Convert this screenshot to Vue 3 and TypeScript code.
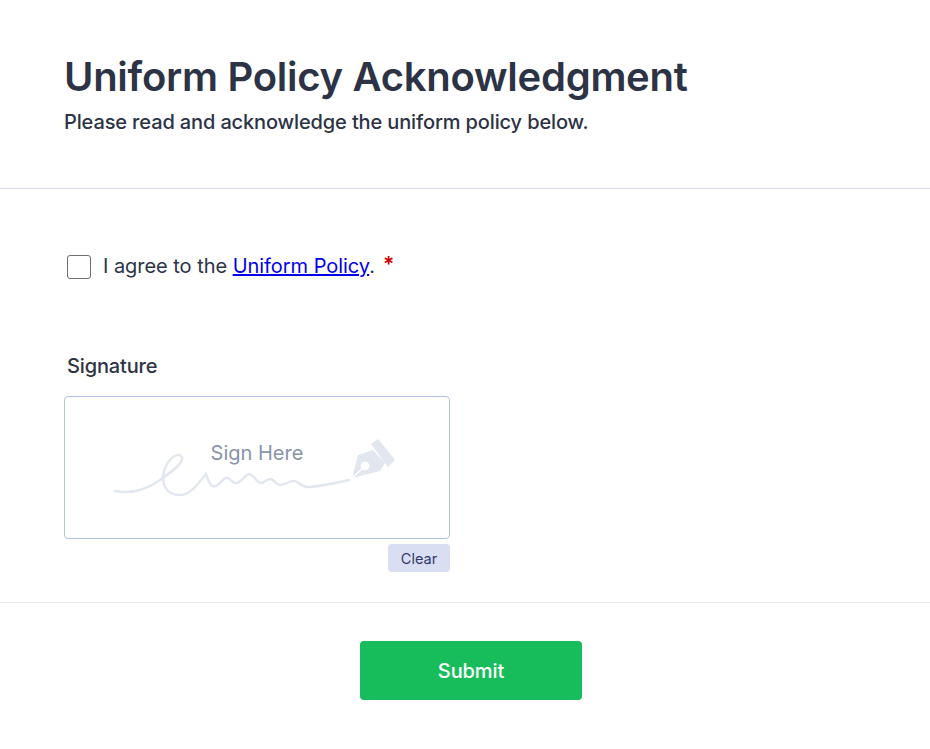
<template>
  <div class="form">
    <!-- Encabezado -->
    <header class="form-header">
      <h1>Uniform Policy Acknowledgment</h1>
      <p>Please read and acknowledge the uniform policy below.</p>
    </header>

    <section class="form-body">
      <label class="agree">
        <input v-model="agreed" type="checkbox" class="agree-box">
        <span>I agree to the <a href="#" class="policy-link">Uniform Policy</a>.</span>
        <span class="required">*</span>
      </label>

      <div class="signature">
        <div class="signature-label">Signature</div>
        <div class="signature-pad">
          <svg class="signature-art" viewBox="64 396 386 143" aria-hidden="true">
            <path
              d="M115 491 C130 494 146 490 160 480 C168 474 184 464 182 457 C179 451 168 458 164 471 C161 484 166 495 180 495 C190 495 198 484 206 474 C209 481 210 488 216 486 C221 484 224 476 228 478 C232 480 233 484 237 483 C243 481 246 473 250 474 C255 476 257 484 262 483 C265 482 267 479 271 479 C275 480 276 485 280 485 C286 485 290 480 295 481 C300 483 303 488 310 487 C322 486 336 483 349 480"
              fill="none"
              stroke="#e1e6ef"
              stroke-width="2.4"
              stroke-linecap="round"
            />
            <path
              fill-rule="evenodd"
              fill="#e1e6ef"
              d="M352 478 L358 455 L373 450 L385 463 L380 471 Z M365 461.5 a4.4 4.4 0 1 0 0.01 0 Z"
            />
            <path d="M352 478 L362 469" stroke="#fff" stroke-width="1.4" fill="none" />
            <path fill="#e1e6ef" d="M371 444 L378 439 L395 460 L388 467 Z" />
          </svg>
          <span class="sign-here">Sign Here</span>
        </div>
        <div class="signature-actions">
          <button type="button" class="clear-btn" @click="agreed = false">Clear</button>
        </div>
      </div>
    </section>

    <footer class="form-footer">
      <button type="button" class="submit-btn">Submit</button>
    </footer>
  </div>
</template>

<script setup lang="ts">
import { ref } from 'vue'

const agreed = ref(false)
</script>

<style>
body {
  background: #fff;
}
</style>

<style scoped>
.form {
  font-family: Inter, "Liberation Sans", sans-serif;
  color: #2c3345;
  background: #fff;
  min-height: 749px;
}

.form-header {
  height: 189px;
  box-sizing: border-box;
  padding: 53px 64px 0;
  border-bottom: 1px solid #d8dae9;
}

.form-header h1 {
  margin: 0;
  font-size: 40px;
  line-height: 48px;
  font-weight: 600;
  letter-spacing: -0.27px;
}

.form-header p {
  margin: 8px 0 0;
  font-size: 20px;
  line-height: 26px;
  font-weight: 500;
  letter-spacing: -0.13px;
}

.form-body {
  padding: 0 0 30px 64px;
  border-bottom: 1px solid #e6e6ea;
}

.agree {
  display: flex;
  align-items: center;
  height: 28px;
  margin-top: 63px;
  padding-left: 3px;
  font-size: 20px;
  letter-spacing: -0.04px;
  color: #2c3345;
}

.agree-box {
  appearance: none;
  width: 24px;
  height: 24px;
  margin: 2px 12px 0 0;
  border: 1px solid #6f6f75;
  border-radius: 3px;
  background: #fff;
}

.policy-link {
  color: #0000ee;
}

.required {
  margin-left: 8px;
  margin-top: -4px;
  color: #d40000;
  font-size: 21px;
  font-weight: 600;
}

.signature {
  width: 386px;
  margin-top: 72px;
}

.signature-label {
  padding-left: 3px;
  font-size: 20px;
  line-height: 28px;
  font-weight: 500;
  letter-spacing: -0.14px;
  margin-bottom: 16px;
}

.signature-pad {
  position: relative;
  height: 143px;
  box-sizing: border-box;
  border: 1px solid #b0c3e3;
  border-radius: 4px;
  text-align: center;
}

.signature-art {
  position: absolute;
  left: -1px;
  top: -1px;
  width: 386px;
  height: 143px;
}

.sign-here {
  position: relative;
  display: block;
  margin-top: 44px;
  font-size: 20px;
  line-height: 24px;
  color: #8894ab;
}

.signature-actions {
  display: flex;
  justify-content: flex-end;
  margin-top: 5px;
}

.clear-btn {
  width: 62px;
  height: 28px;
  padding: 0;
  border: 0;
  border-radius: 4px;
  background: #dadef3;
  color: #2f3a6c;
  font: 400 14.5px Inter, "Liberation Sans", sans-serif;
}

.form-footer {
  display: flex;
  justify-content: center;
  padding: 38px 0 0 12px;
}

.submit-btn {
  width: 222px;
  height: 59px;
  padding: 1px 0 0;
  border: 0;
  border-radius: 4px;
  background: #18bd5b;
  color: #fff;
  font: 500 20px Inter, "Liberation Sans", sans-serif;
  letter-spacing: -0.1px;
}
</style>
